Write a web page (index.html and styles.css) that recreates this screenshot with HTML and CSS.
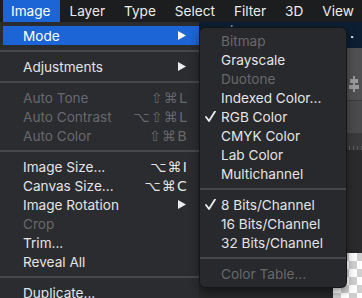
FILE: index.html
```html
<!DOCTYPE html>
<html>
<head>
<meta charset="utf-8">
<link rel="stylesheet" href="styles.css">
</head>
<body>
<div class="screen">
  <div class="menubar">
    <span class="mb-item active">Image</span>
    <span class="mb-item">Layer</span>
    <span class="mb-item">Type</span>
    <span class="mb-item">Select</span>
    <span class="mb-item">Filter</span>
    <span class="mb-item">3D</span>
    <span class="mb-item">View</span>
  </div>
  <div class="workspace">
    <div class="menu main">
      <div class="row hl"><span class="label">Mode</span><svg class="arrow" viewBox="0 0 8 9"><polygon points="0,0 8,4.5 0,9"/></svg></div>
      <div class="sep"></div>
      <div class="row"><span class="label">Adjustments</span><svg class="arrow" viewBox="0 0 8 9"><polygon points="0,0 8,4.5 0,9"/></svg></div>
      <div class="sep"></div>
      <div class="row dis"><span class="label">Auto Tone</span><span class="key">⇧⌘L</span></div>
      <div class="row dis"><span class="label">Auto Contrast</span><span class="key">⌥⇧⌘L</span></div>
      <div class="row dis"><span class="label">Auto Color</span><span class="key">⇧⌘B</span></div>
      <div class="sep"></div>
      <div class="row"><span class="label">Image Size...</span><span class="key">⌥⌘I</span></div>
      <div class="row"><span class="label">Canvas Size...</span><span class="key">⌥⌘C</span></div>
      <div class="row"><span class="label">Image Rotation</span><svg class="arrow" viewBox="0 0 8 9"><polygon points="0,0 8,4.5 0,9"/></svg></div>
      <div class="row dis"><span class="label">Crop</span></div>
      <div class="row"><span class="label">Trim...</span></div>
      <div class="row"><span class="label">Reveal All</span></div>
      <div class="sep"></div>
      <div class="row"><span class="label">Duplicate...</span></div>
    </div>
    <div class="canvas">
      <div class="navy"></div>
      <div class="panel-a"><svg class="align" viewBox="0 0 10 16"><rect x="4" y="0" width="2" height="16"/><rect x="1" y="3" width="8" height="4"/><rect x="0" y="9" width="10" height="4"/></svg></div>
      <div class="panel-b"></div>
      <div class="ruler"></div>
      <div class="dark"></div>
      <div class="checker"></div>
      <div class="menu sub">
        <div class="row dis"><span class="label">Bitmap</span></div>
        <div class="row"><span class="label">Grayscale</span></div>
        <div class="row dis"><span class="label">Duotone</span></div>
        <div class="row"><span class="label">Indexed Color...</span></div>
        <div class="row"><svg class="check" viewBox="0 0 11 11"><polyline points="1,6 4,10 10,0.5"/></svg><span class="label">RGB Color</span></div>
        <div class="row"><span class="label">CMYK Color</span></div>
        <div class="row"><span class="label">Lab Color</span></div>
        <div class="row"><span class="label">Multichannel</span></div>
        <div class="sep"></div>
        <div class="row"><svg class="check" viewBox="0 0 11 11"><polyline points="1,6 4,10 10,0.5"/></svg><span class="label">8 Bits/Channel</span></div>
        <div class="row"><span class="label">16 Bits/Channel</span></div>
        <div class="row"><span class="label">32 Bits/Channel</span></div>
        <div class="sep"></div>
        <div class="row dis"><span class="label">Color Table...</span></div>
      </div>
    </div>
  </div>
</div>
</body>
</html>
```

FILE: styles.css
```css
html, body {
  margin: 0;
  padding: 0;
  background: #1d1e20;
}
.screen {
  width: 362px;
  height: 298px;
  overflow: hidden;
  display: flex;
  flex-direction: column;
  font-family: Inter, "Noto Sans", "DejaVu Sans", sans-serif;
  font-size: 13.6px;
  color: #e4e4e6;
}
.menubar {
  height: 22px;
  flex: none;
  display: flex;
  align-items: stretch;
  padding-left: 3px;
  background: #1c1d1f;
}
.mb-item {
  display: flex;
  align-items: center;
  padding: 0 9.5px;
  color: #ececee;
  font-size: 13.6px;
  white-space: nowrap;
}
.mb-item.active {
  background: #1c65d6;
  padding-left: 8px;
  color: #ffffff;
}
.workspace {
  flex: 1;
  display: flex;
  min-height: 0;
}
.menu.main {
  width: 199px;
  flex: none;
  background: #2b2c2f;
  padding-top: 4px;
  box-sizing: border-box;
}
.row {
  height: 19px;
  display: flex;
  align-items: center;
  padding-left: 20px;
  padding-right: 12px;
  position: relative;
}
.menu.main .row {
  margin-left: 3px;
}
.row .label {
  flex: 1;
  white-space: nowrap;
}
.row.hl {
  background: #1c65d6;
  color: #ffffff;
}
.row.dis {
  color: #67686b;
}
.key {
  font-family: "DejaVu Sans", Inter, sans-serif;
  font-size: 14px;
  letter-spacing: 1.2px;
  margin-right: -1px;
}
.arrow {
  width: 8px;
  height: 9px;
  fill: #ececee;
  margin-right: 1px;
}
.row.hl .arrow {
  fill: #ffffff;
}
.sep {
  height: 2px;
  margin: 5px 0;
  background: #46474a;
}
.canvas {
  flex: 1;
  position: relative;
  display: grid;
  grid-template-columns: 1fr 12px 17px;
  grid-template-rows: 26px 52px 33px 17px 103px 1fr;
  background: #262729;
}
.navy {
  grid-column: 1 / 4;
  grid-row: 1;
  background: #0c1e31;
  background-image: radial-gradient(circle at 58% 30%, #8aa0b8 0 1px, transparent 1.5px),
                    radial-gradient(circle at 94% 58%, #c8d4e0 0 1px, transparent 1.5px),
                    radial-gradient(circle at 20% 15%, #6c829b 0 0.8px, transparent 1.3px);
}
.panel-a {
  grid-column: 3;
  grid-row: 2;
  background: #505052;
  display: flex;
  justify-content: center;
  align-items: flex-start;
  padding-top: 28px;
  box-sizing: border-box;
}
.align {
  width: 10px;
  height: 16px;
  fill: #9a9a9c;
}
.panel-b {
  grid-column: 3;
  grid-row: 3;
  background: #4a4a4c;
  border-top: 1px solid #3a3a3c;
  border-left: 1px solid #3e3e40;
}
.ruler {
  grid-column: 3;
  grid-row: 4;
  background: #3a3a3c;
  background-image: repeating-linear-gradient(90deg, #5a5a5c 0 1px, transparent 1px 4px);
  background-size: 100% 4px;
  background-repeat: no-repeat;
  background-position: bottom;
}
.dark {
  grid-column: 1 / 4;
  grid-row: 5;
  background: #2a2a2c;
}
.checker {
  grid-column: 2 / 4;
  grid-row: 6;
  background-color: #ffffff;
  background-image:
    linear-gradient(45deg, #cfcfcf 25%, transparent 25%, transparent 75%, #cfcfcf 75%),
    linear-gradient(45deg, #cfcfcf 25%, transparent 25%, transparent 75%, #cfcfcf 75%);
  background-size: 16px 16px;
  background-position: 0 0, 8px 8px;
}
.menu.sub {
  position: absolute;
  left: 1px;
  top: 6px;
  width: 146px;
  background: #27292c;
  border-radius: 5px;
  padding: 3px 0 4px;
  box-shadow: 0 0 0 1px #151618, 0 4px 10px rgba(0,0,0,0.5);
}
.menu.sub .row {
  padding-left: 21px;
}
.check {
  position: absolute;
  left: 5px;
  top: 4px;
  width: 11px;
  height: 11px;
  fill: none;
  stroke: #ececee;
  stroke-width: 1.8;
  stroke-linecap: round;
  stroke-linejoin: round;
}
```
